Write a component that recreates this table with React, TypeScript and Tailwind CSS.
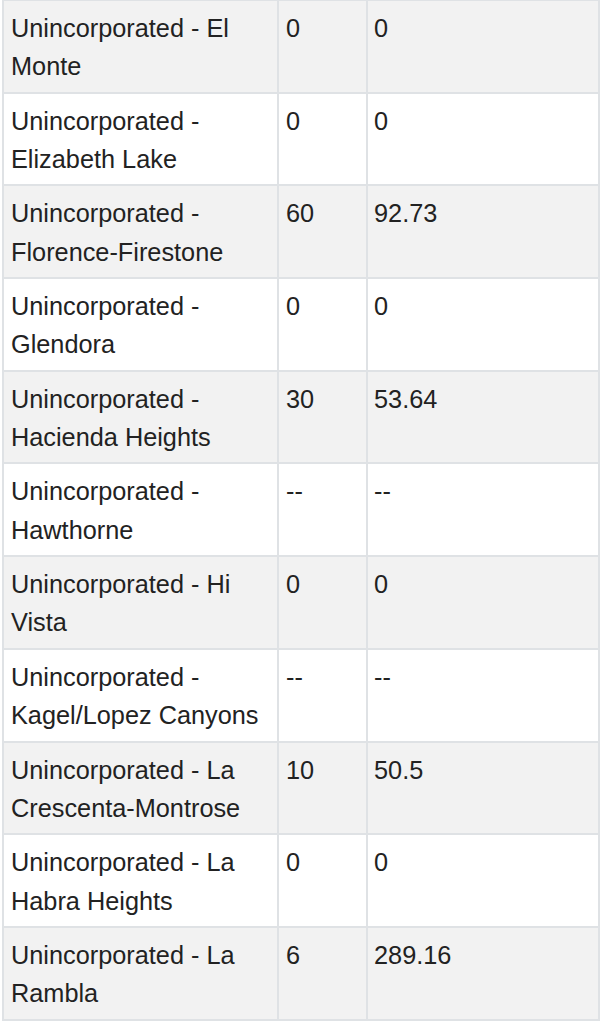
const rows: [string, string, string][] = [
  ["Unincorporated - El Monte", "0", "0"],
  ["Unincorporated - Elizabeth Lake", "0", "0"],
  ["Unincorporated - Florence-Firestone", "60", "92.73"],
  ["Unincorporated - Glendora", "0", "0"],
  ["Unincorporated - Hacienda Heights", "30", "53.64"],
  ["Unincorporated - Hawthorne", "--", "--"],
  ["Unincorporated - Hi Vista", "0", "0"],
  ["Unincorporated - Kagel/Lopez Canyons", "--", "--"],
  ["Unincorporated - La Crescenta-Montrose", "10", "50.5"],
  ["Unincorporated - La Habra Heights", "0", "0"],
  ["Unincorporated - La Rambla", "6", "289.16"],
];

export default function App() {
  return (
    <div className="w-[600px] h-[1023px] overflow-hidden bg-white font-['Liberation_Sans',Arial,sans-serif] text-[25.3px] leading-[38.35px] text-[#222222]">
      <table className="-mt-px ml-[2px] w-[598px] table-fixed border-collapse">
        <colgroup>
          <col className="w-[275px]" />
          <col className="w-[89px]" />
          <col />
        </colgroup>
        <tbody>
          {rows.map(([name, a, b], i) => (
            <tr key={name} className={i % 2 === 0 ? "bg-[#f2f2f2]" : "bg-white"}>
              <td className="border-2 border-[#dfe2e5] px-[7px] pt-[8px] pb-[6px] align-top">{name}</td>
              <td className="border-2 border-[#dfe2e5] px-[7px] pt-[8px] pb-[6px] align-top">{a}</td>
              <td className="border-2 border-[#dfe2e5] px-[6px] pt-[8px] pb-[6px] align-top">{b}</td>
            </tr>
          ))}
        </tbody>
      </table>
    </div>
  );
}
